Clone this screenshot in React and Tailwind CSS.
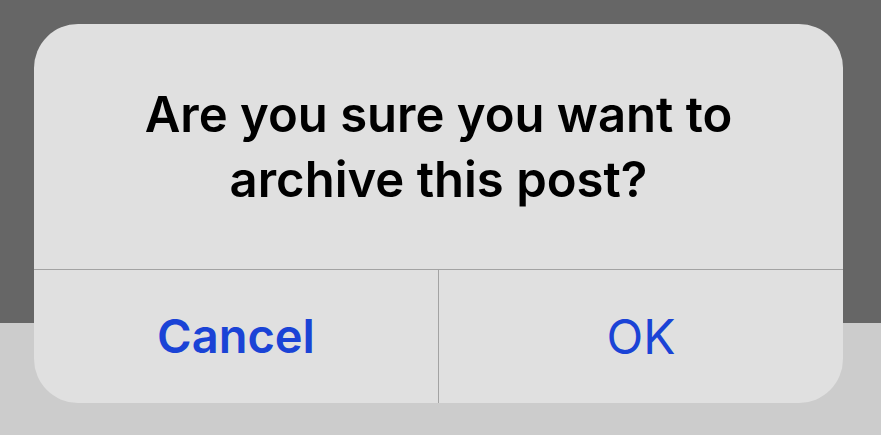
export default function App() {
  return (
    <div
      className="relative w-[881px] h-[435px] overflow-hidden flex flex-col"
      style={{ fontFamily: "Inter, 'Liberation Sans', sans-serif" }}
    >
      <div className="h-[323px] bg-[#666666]" />
      <div className="flex-1 bg-[#cccccc]" />

      <div className="absolute left-[34px] top-[24px] w-[809px] h-[379px] rounded-[44px] bg-[#e0e0e0] flex flex-col overflow-hidden">
        <div className="h-[246px] flex items-center justify-center px-8 border-b border-[#a3a3a3]">
          <p className="text-center text-black font-semibold text-[49px] leading-[65px]">
            Are you sure you want to
            <br />
            archive this post?
          </p>
        </div>
        <div className="flex-1 flex">
          <button className="flex-1 flex items-center justify-center text-[#1a43d6] font-semibold text-[47px] border-r border-[#a3a3a3]">
            Cancel
          </button>
          <button className="flex-1 flex items-center justify-center text-[#1a43d6] font-normal text-[48px]">
            OK
          </button>
        </div>
      </div>
    </div>
  );
}
